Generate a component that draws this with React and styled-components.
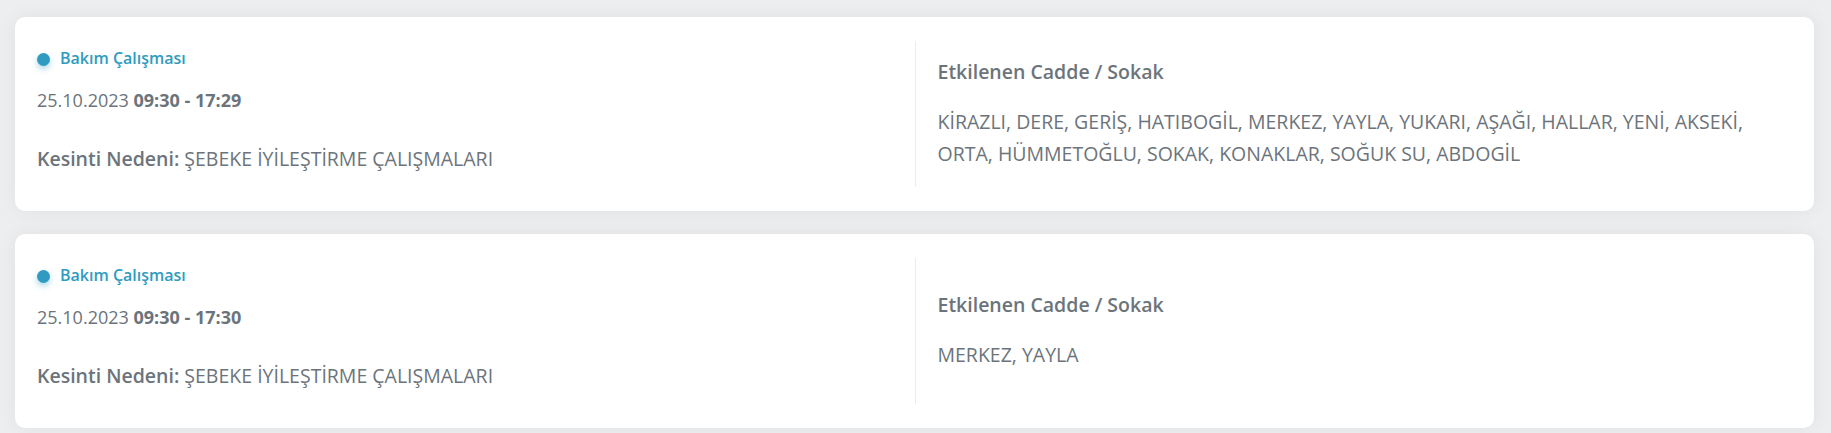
import React from "react";
import styled, { createGlobalStyle } from "styled-components";

const GlobalStyle = createGlobalStyle`
    html, body {
        margin: 0;
        padding: 0;
        background: #eceef0;
        font-family: "Open Sans", "Noto Sans", sans-serif;
    }
`;

const TEXT = "#6c747b";
const ACCENT = "#2f9bc0";

const List = styled.div`
    display: flex;
    flex-direction: column;
    gap: 23px;
    padding: 17px 17px 8px 15px;
`;

const Card = styled.div`
    display: grid;
    grid-template-columns: 1fr 1fr;
    background: #ffffff;
    border-radius: 10px;
    padding: 24px 22px;
    box-shadow: 0 0 20px rgba(0, 0, 0, 0.06);
`;

const InfoColumn = styled.div`
    min-height: 146px;
    display: flex;
    flex-direction: column;
    padding: 7px 22px 0 0;
    box-sizing: border-box;
`;

const StreetColumn = styled.div`
    min-height: 146px;
    display: flex;
    flex-direction: column;
    justify-content: center;
    border-left: 1px solid #ececec;
    padding: 0 22px;
`;

const Status = styled.div`
    display: flex;
    align-items: center;
    gap: 10px;
    font-size: 16px;
    line-height: 20px;
    font-weight: 600;
    color: ${ACCENT};
`;

const Dot = styled.span`
    width: 13px;
    height: 13px;
    margin-top: 2px;
    border-radius: 50%;
    background: ${ACCENT};
    box-shadow: 0 3px 6px rgba(47, 155, 192, 0.4);
`;

const DateLine = styled.div`
    margin-top: 20px;
    font-size: 18px;
    line-height: 24px;
    color: ${TEXT};

    & > b {
        font-weight: 700;
    }
`;

const Reason = styled.div`
    margin-top: 34px;
    font-size: 19.5px;
    line-height: 26px;
    color: ${TEXT};

    & > b {
        font-weight: 600;
    }
`;

const StreetTitle = styled.div`
    font-size: 19.5px;
    line-height: 26px;
    font-weight: 600;
    color: ${TEXT};
`;

const Streets = styled.div`
    margin-top: 21px;
    font-size: 19.5px;
    line-height: 32px;
    color: ${TEXT};
`;

const outages = [
    {
        date: "25.10.2023",
        time: "09:30 - 17:29",
        reason: "ŞEBEKE İYİLEŞTİRME ÇALIŞMALARI",
        streets:
            "KİRAZLI, DERE, GERİŞ, HATIBOGİL, MERKEZ, YAYLA, YUKARI, AŞAĞI, HALLAR, YENİ, AKSEKİ, ORTA, HÜMMETOĞLU, SOKAK, KONAKLAR, SOĞUK SU, ABDOGİL",
    },
    {
        date: "25.10.2023",
        time: "09:30 - 17:30",
        reason: "ŞEBEKE İYİLEŞTİRME ÇALIŞMALARI",
        streets: "MERKEZ, YAYLA",
    },
];

const OutageCard = ({ outage }) => (
    <Card>
        <InfoColumn>
            <Status>
                <Dot />
                Bakım Çalışması
            </Status>
            <DateLine>
                {outage.date} <b>{outage.time}</b>
            </DateLine>
            <Reason>
                <b>Kesinti Nedeni:</b> {outage.reason}
            </Reason>
        </InfoColumn>
        <StreetColumn>
            <StreetTitle>Etkilenen Cadde / Sokak</StreetTitle>
            <Streets>{outage.streets}</Streets>
        </StreetColumn>
    </Card>
);

export default function App() {
    return (
        <>
            <GlobalStyle />
            <List>
                {outages.map((outage, i) => (
                    <OutageCard key={i} outage={outage} />
                ))}
            </List>
        </>
    );
}
